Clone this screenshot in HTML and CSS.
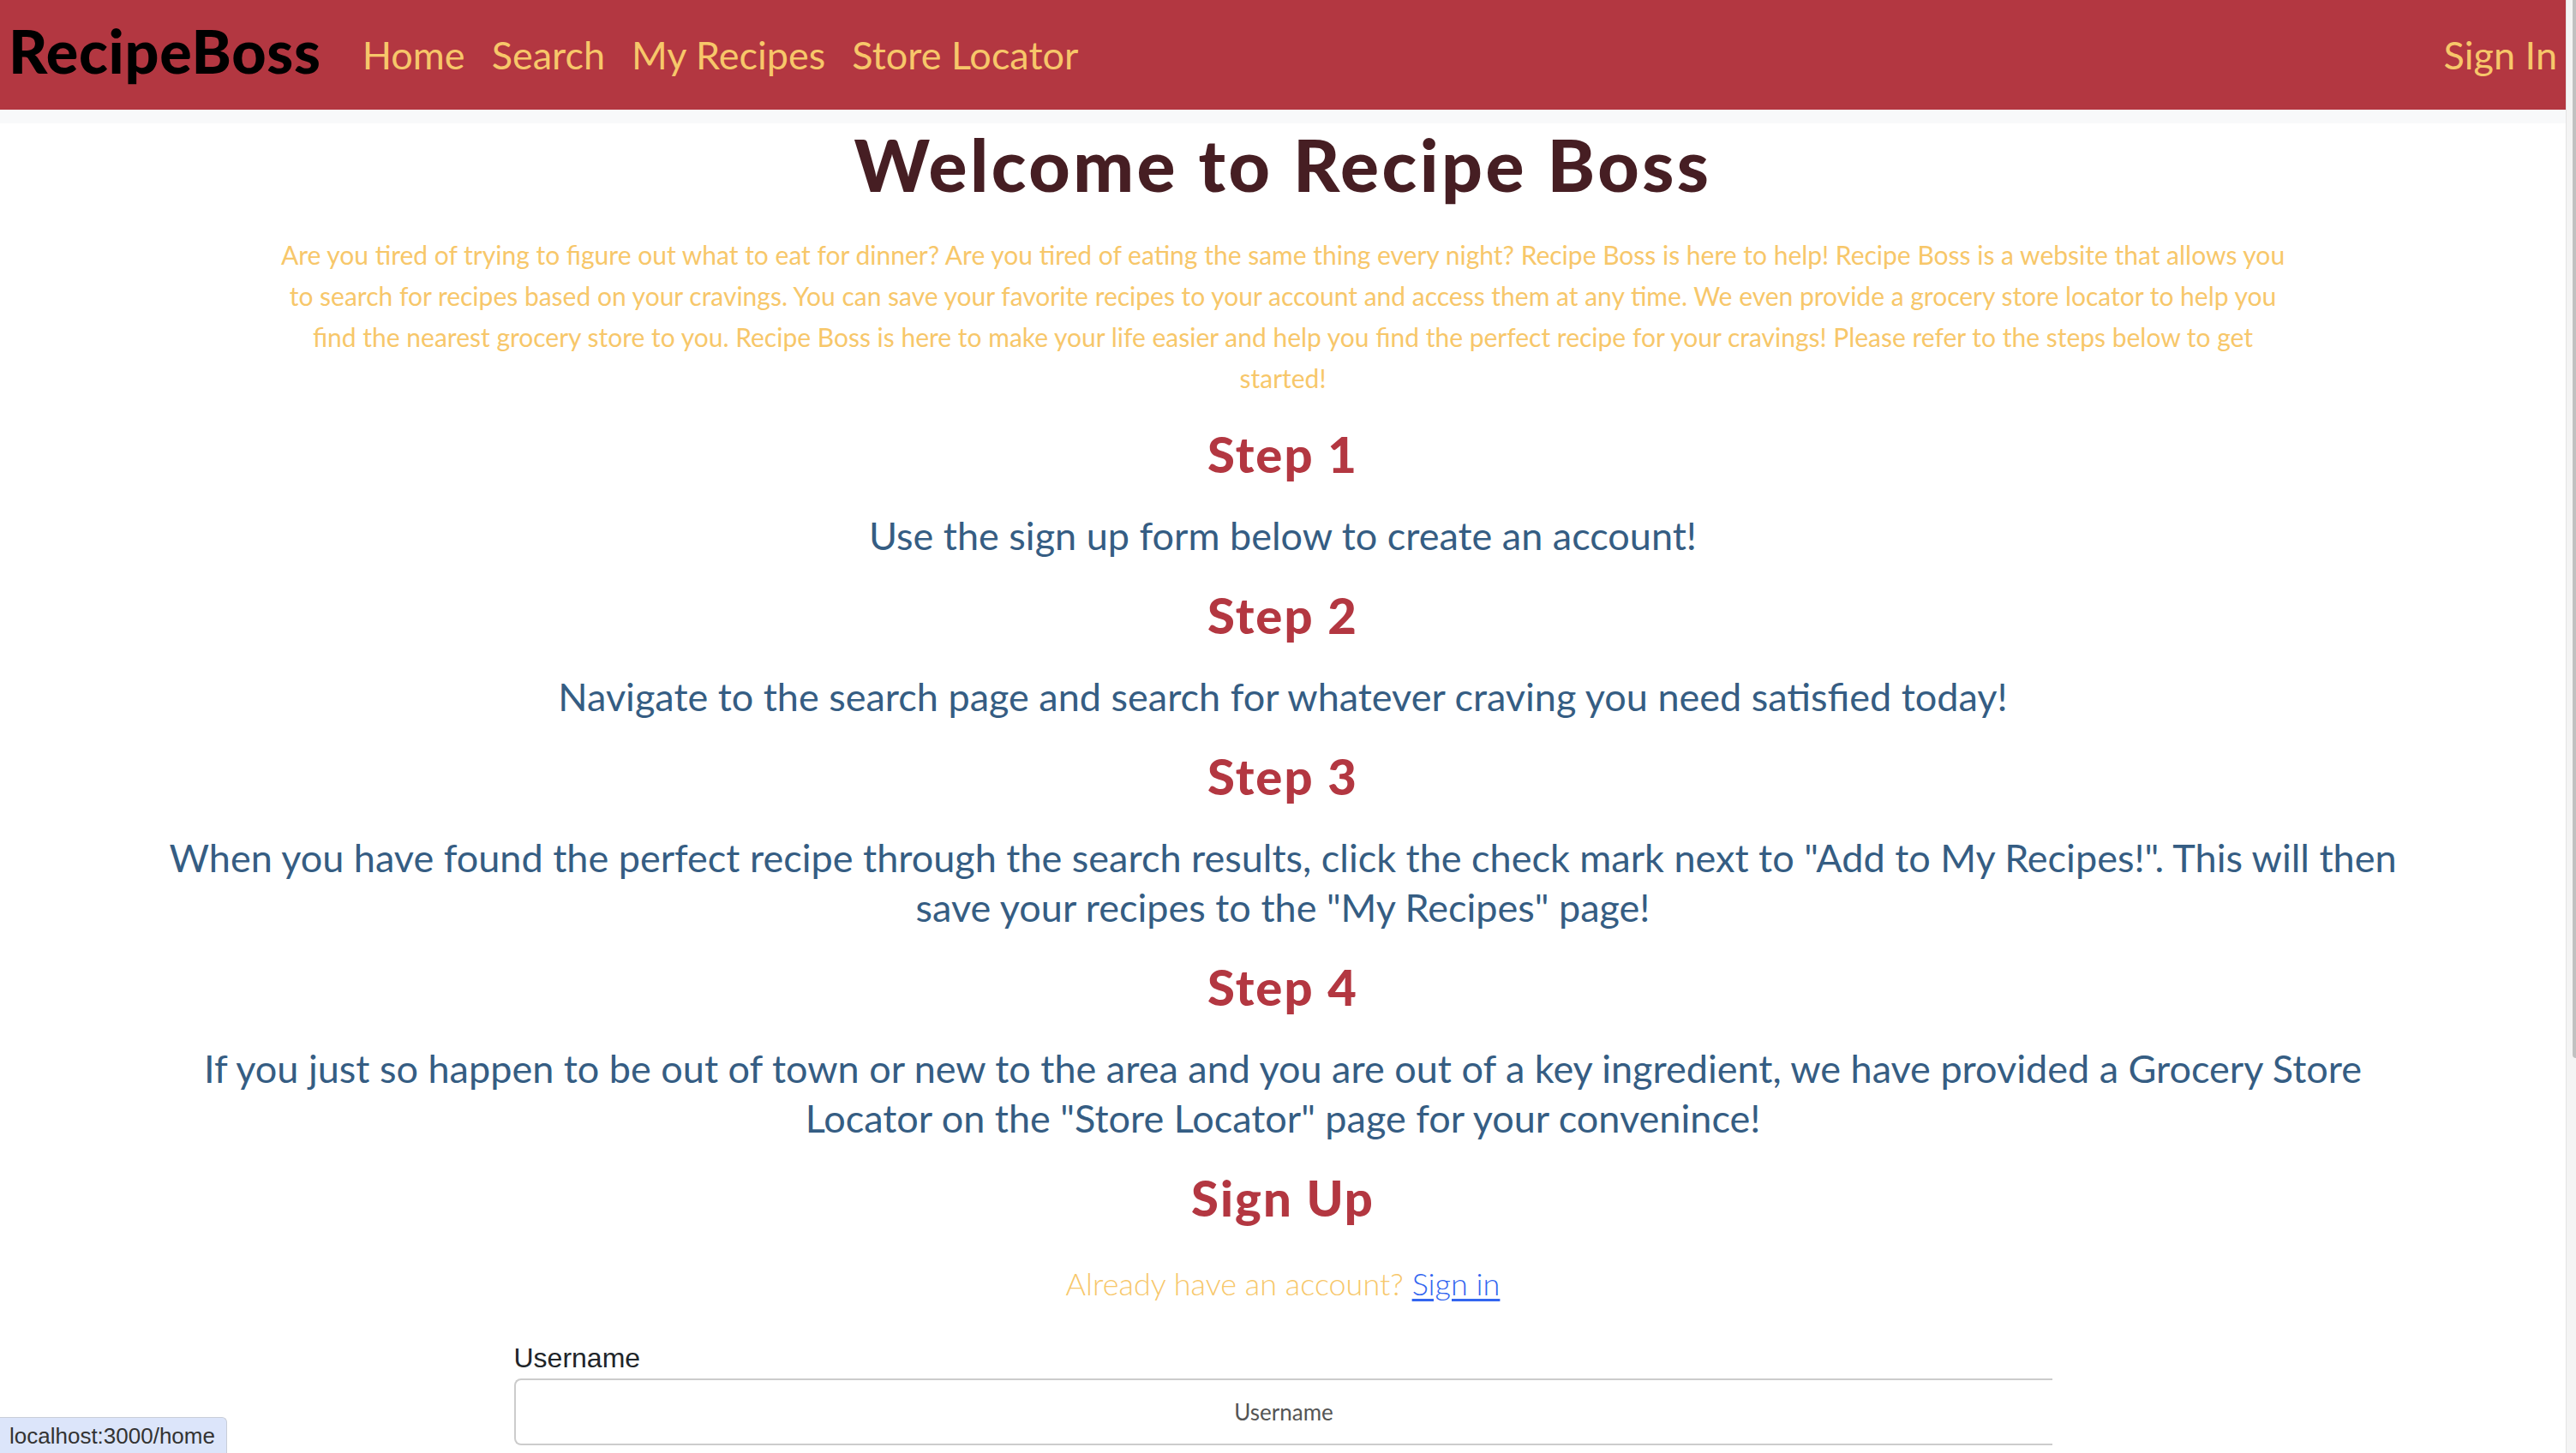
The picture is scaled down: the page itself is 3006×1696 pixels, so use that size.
FILE: index.html
```html
<!DOCTYPE html>
<html lang="en">
<head>
<meta charset="utf-8">
<title>RecipeBoss</title>
<link rel="stylesheet" href="styles.css">
</head>
<body>
<div class="page">
  <nav class="navbar">
    <a class="brand" href="#">RecipeBoss</a>
    <ul class="nav-links">
      <li><a href="#">Home</a></li>
      <li><a href="#">Search</a></li>
      <li><a href="#">My Recipes</a></li>
      <li><a href="#">Store Locator</a></li>
    </ul>
    <a class="nav-signin" href="#">Sign In</a>
  </nav>
  <div class="subbar"></div>
  <main class="content">
    <h1 class="title">Welcome to Recipe Boss</h1>
    <p class="intro">Are you tired of trying to figure out what to eat for dinner? Are you tired of eating the same thing every night? Recipe Boss is here to help! Recipe Boss is a website that allows you to search for recipes based on your cravings. You can save your favorite recipes to your account and access them at any time. We even provide a grocery store locator to help you find the nearest grocery store to you. Recipe Boss is here to make your life easier and help you find the perfect recipe for your cravings! Please refer to the steps below to get started!</p>

    <h2 class="step-title">Step 1</h2>
    <p class="step-text">Use the sign up form below to create an account!</p>

    <h2 class="step-title">Step 2</h2>
    <p class="step-text">Navigate to the search page and search for whatever craving you need satisfied today!</p>

    <h2 class="step-title">Step 3</h2>
    <p class="step-text">When you have found the perfect recipe through the search results, click the check mark next to "Add to My Recipes!". This will then save your recipes to the "My Recipes" page!</p>

    <h2 class="step-title">Step 4</h2>
    <p class="step-text">If you just so happen to be out of town or new to the area and you are out of a key ingredient, we have provided a Grocery Store Locator on the "Store Locator" page for your convenince!</p>

    <h2 class="step-title">Sign Up</h2>
    <p class="already">Already have an account? <a href="#">Sign in</a></p>

    <form class="signup-form">
      <label class="form-label" for="username">Username</label>
      <input class="form-input" id="username" type="text" placeholder="Username">
    </form>
  </main>
</div>
<div class="scrollbar"><div class="thumb"></div></div>
<div class="status-bar">localhost:3000/home</div>
</body>
</html>
```

FILE: styles.css
```css
html, body {
  margin: 0;
  padding: 0;
  height: 100%;
  overflow: hidden;
  background: #ffffff;
}

body {
  display: flex;
  font-family: "Lato", "Open Sans", sans-serif;
}

.page {
  flex: 1;
  min-width: 0;
  overflow: hidden;
}

/* Navbar */
.navbar {
  height: 128px;
  background: #b33741;
  display: flex;
  align-items: center;
  padding: 0 10px 0 10px;
  box-sizing: border-box;
}

.brand {
  font-family: "Lato", sans-serif;
  font-weight: 900;
  font-size: 70px;
  color: #000000;
  text-decoration: none;
  margin-bottom: 10px;
  letter-spacing: 0.7px;
}

.nav-links {
  display: flex;
  gap: 31px;
  list-style: none;
  margin: 0 0 0 48px;
  padding: 0;
}

.nav-links a,
.nav-signin {
  font-size: 45px;
  color: #f7c76a;
  text-decoration: none;
}

.nav-signin {
  margin-left: auto;
}

.subbar {
  height: 16px;
  background: #f8f9fa;
}

/* Content */
.content {
  text-align: center;
}

.title {
  margin: 0;
  font-size: 84px;
  line-height: 96px;
  font-weight: 900;
  letter-spacing: 3.5px;
  color: #461e23;
}

.intro {
  max-width: 2350px;
  margin: 33px auto 0;
  font-size: 30px;
  line-height: 48px;
  color: #f7c76a;
}

.step-title {
  margin: 30px 0 0;
  font-size: 58px;
  line-height: 68px;
  font-weight: 900;
  letter-spacing: 2px;
  color: #b33741;
}

.intro + .step-title {
  margin-top: 31px;
}

.step-text {
  max-width: 2630px;
  margin: 32px auto 0;
  font-size: 45px;
  line-height: 58px;
  color: #355d83;
}

.already {
  margin: 41px 0 0;
  font-size: 36px;
  line-height: 50px;
  font-weight: 300;
  color: #f7c76a;
}

.already a {
  color: #3366f0;
  text-decoration: underline;
  text-underline-offset: 4px;
}

/* Form */
.signup-form {
  width: 1795px;
  margin: 43px auto 0;
  text-align: left;
}

.form-label {
  display: block;
  font-family: "Liberation Sans", Arial, sans-serif;
  font-size: 32px;
  line-height: 38px;
  color: #212529;
}

.form-input {
  display: block;
  box-sizing: border-box;
  width: 100%;
  height: 78px;
  margin-top: 5px;
  border: 2px solid #cccccc;
  border-right: 0;
  border-radius: 8px 0 0 8px;
  font-family: "Lato", sans-serif;
  font-size: 26px;
  text-align: center;
  color: #555555;
  outline: none;
}

.form-input::placeholder {
  color: #555555;
}

/* Fake window scrollbar */
.scrollbar {
  width: 12px;
  flex: none;
  background: #f4f4f4;
  border-left: 1px solid #e4e4e4;
  box-sizing: border-box;
  overflow: hidden;
}

.thumb {
  margin-left: 7px;
  width: 8px;
  height: 1235px;
  background: #c1c1c1;
  border-radius: 0 0 4px 4px;
}

/* Browser link-hover status overlay */
.status-bar {
  position: fixed;
  left: 0;
  bottom: 0;
  width: 265px;
  height: 42px;
  box-sizing: border-box;
  padding: 6px 0 0 11px;
  background: #dce5fa;
  border-top: 1px solid #c9ced8;
  border-right: 1px solid #c9ced8;
  border-top-right-radius: 6px;
  font-family: "Liberation Sans", Arial, sans-serif;
  font-size: 26px;
  line-height: 30px;
  color: #333333;
  white-space: nowrap;
}
```
